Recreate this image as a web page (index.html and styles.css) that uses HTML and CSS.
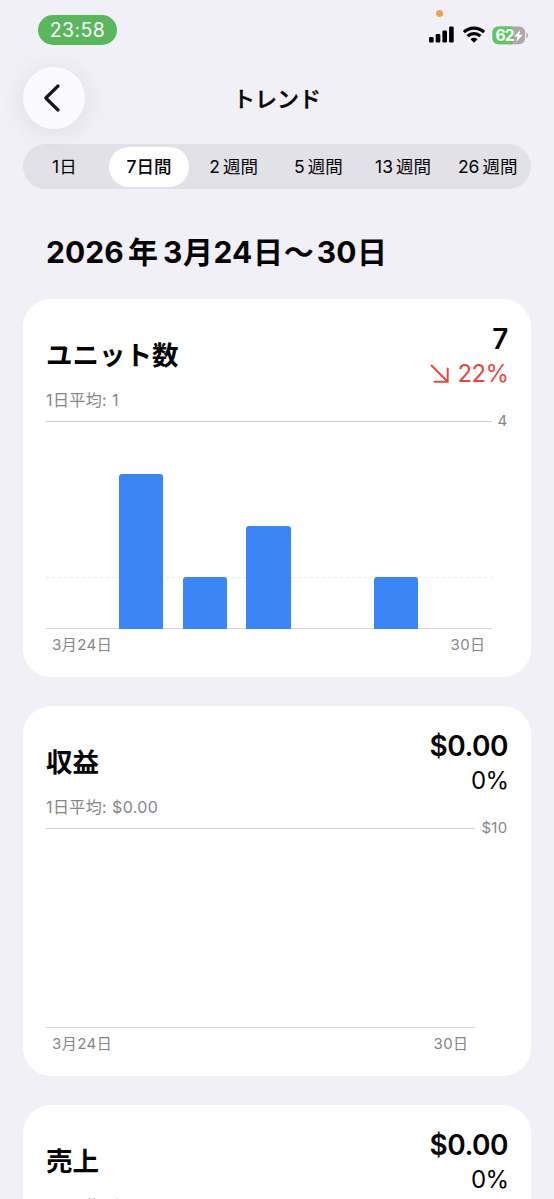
FILE: index.html
```html
<!DOCTYPE html>
<html lang="ja">
<head>
<meta charset="utf-8">
<title>トレンド</title>
<link rel="stylesheet" href="styles.css">
</head>
<body>
<div class="screen">
  <header class="status">
    <span class="clock">23:58</span>
    <div class="indicators">
      <i class="mic-dot"></i>
      <svg class="signal" width="25" height="17" viewBox="0 0 25 17"><rect x="0" y="11" width="4.6" height="5.6" rx="1.3"/><rect x="6.7" y="8" width="4.6" height="8.6" rx="1.3"/><rect x="13.4" y="4.4" width="4.6" height="12.2" rx="1.3"/><rect x="20.1" y="0.5" width="4.6" height="16.1" rx="1.3"/></svg>
      <svg class="wifi" width="24" height="17" viewBox="0 0 24 17"><path d="M1.9 6.2a14.4 14.4 0 0 1 20.2 0M5.6 10.2a9.2 9.2 0 0 1 12.8 0" fill="none" stroke="#000" stroke-width="3.2"/><path d="M8.5 13.2a5 5 0 0 1 7 0L12 16.8z"/></svg>
      <svg class="battery" width="37" height="19" viewBox="0 0 37 19"><defs><clipPath id="cell"><rect x="0.5" y="0.5" width="32.5" height="17.7" rx="5.6"/></clipPath></defs><g clip-path="url(#cell)"><path fill="#a9a9ad" d="M0 0h34v19H0z"/><path fill="#5dc85f" d="M0 0h20.7v19H0z"/></g><path fill="#a9a9ad" d="M34.2 6.4c2.4 1 2.4 4.8 0 5.8z"/><text x="3.4" y="15">62</text><path fill="#fff" d="M28.6 3.8 22.2 10.4h3.6l-1.7 5.6 6.7-7.2h-3.9z"/></svg>
    </div>
  </header>

  <nav class="navbar">
    <button class="back" aria-label="戻る"><svg width="18" height="28" viewBox="0 0 18 28"><path d="M15 2 2.8 14 15 26" fill="none" stroke="#161618" stroke-width="3.2" stroke-linecap="round" stroke-linejoin="round"/></svg></button>
    <h1>トレンド</h1>
  </nav>

  <div class="segments">
    <span>1日</span><span class="on">7日間</span><span>2<b>週間</b></span><span>5<b>週間</b></span><span>13<b>週間</b></span><span>26<b>週間</b></span>
  </div>

  <h2 class="period">2026<span class="year">年</span>3<span class="month">月</span>24<span class="day">日</span><span class="tilde">〜</span>30<span class="day">日</span></h2>

  <section class="card units">
    <div class="head">
      <h3>ユニット数</h3>
      <div class="figures">
        <strong>7</strong>
        <span class="change down"><svg width="20" height="20" viewBox="0 0 20 20"><path d="M1.5 1.5 17.7 17.7M17.7 4.5v13.2H4.5" fill="none" stroke="#e5493c" stroke-width="2" stroke-linecap="round"/></svg><span>22%</span></span>
      </div>
    </div>
    <p class="average">1日平均: 1</p>
    <div class="chart">
      <div class="plot">
        <div class="slot"></div>
        <div class="slot"><i style="height:75%"></i></div>
        <div class="slot"><i style="height:25%"></i></div>
        <div class="slot"><i style="height:50%"></i></div>
        <div class="slot"></div>
        <div class="slot"><i style="height:25%"></i></div>
        <div class="slot"></div>
      </div>
      <span class="max">4</span>
    </div>
    <div class="dates"><span>3月24日</span><span>30日</span></div>
  </section>

  <section class="card income">
    <div class="head">
      <h3>収益</h3>
      <div class="figures"><strong>$0.00</strong><span class="change">0%</span></div>
    </div>
    <p class="average">1日平均: $0.00</p>
    <div class="chart">
      <div class="plot"></div>
      <span class="max">$10</span>
    </div>
    <div class="dates"><span>3月24日</span><span>30日</span></div>
  </section>

  <section class="card sales">
    <div class="head">
      <h3>売上</h3>
      <div class="figures"><strong>$0.00</strong><span class="change">0%</span></div>
    </div>
    <p class="average">1日平均: $0.00</p>
  </section>
</div>
</body>
</html>
```
FILE: styles.css
```css
* { box-sizing: border-box; margin: 0; padding: 0; }
body { background: #f0f0f6; color: #050506; font-family: Inter, "Noto Sans CJK JP", sans-serif; }
.screen { width: 554px; height: 1199px; overflow: hidden; padding: 0 23px; }

.status { height: 67px; display: flex; justify-content: space-between; padding: 15px 2px 0 15px; }
.clock { width: 79px; height: 30px; border-radius: 15px; background: #5bb75d; color: #fff; font-size: 19.5px; line-height: 31px; text-align: center; letter-spacing: .4px; }
.indicators { position: relative; display: flex; align-items: flex-start; padding-top: 11px; }
.mic-dot { position: absolute; left: 7px; top: -5px; width: 7px; height: 7px; border-radius: 50%; background: #eea05a; }
.wifi { margin-left: 8px; }
.battery { margin-left: 6px; }
.battery text { font: 700 15.5px Inter, sans-serif; letter-spacing: -0.6px; fill: #fff; }

.navbar { height: 62px; display: grid; grid-template-columns: 62px 1fr 62px; align-items: center; }
.back { width: 62px; height: 62px; border: 0; border-radius: 50%; background: #fafaff; box-shadow: 0 3px 28px rgba(40, 40, 70, .09); display: flex; align-items: center; justify-content: center; padding-right: 4px; }
h1 { font-size: 22px; font-weight: 500; line-height: 60px; text-align: center; -webkit-text-stroke: .4px; padding-top: 2px; }

.segments { margin-top: 15px; height: 45px; border-radius: 23px; background: #e2e1e8; display: grid; grid-template-columns: repeat(6, 1fr); align-items: center; }
.segments span { margin: 0 3.5px 0 1.5px; height: 40px; line-height: 39px; border-radius: 20px; font-size: 17.5px; text-align: center; white-space: nowrap; }
.segments b { font-weight: 400; margin-left: 3px; }
.segments .on { background: #fff; font-weight: 500; }

.period { height: 110px; padding: 0 0 0 23px; font-size: 30px; font-weight: 700; line-height: 126px; white-space: nowrap; letter-spacing: .1px; }
.year { margin: 0 5px 0 4px; }
.month, .day { margin: 0 .5px; }
.tilde { margin-right: 3px; }

.card { background: #fff; border-radius: 28px; height: 378px; padding: 25px 23px 0; margin-bottom: 29px; }
.head { height: 63px; display: flex; justify-content: space-between; align-items: flex-start; }
h3 { font-size: 26.5px; font-weight: 700; line-height: 62px; }
.figures { display: flex; flex-direction: column; align-items: flex-end; }
.figures strong { font-size: 28px; font-weight: 600; line-height: 30px; letter-spacing: -.5px; }
.change { font-size: 24px; line-height: 39px; display: flex; align-items: center; letter-spacing: -.6px; margin-right: -.6px; }
.down { color: #e5493c; gap: 8px; }
.average { height: 34px; font-size: 16px; line-height: 27px; color: #85858a; letter-spacing: .4px; }
.chart { display: flex; justify-content: space-between; height: 208px; }
.plot { position: relative; width: 446px; height: 208px; display: grid; grid-template-columns: repeat(7, 1fr); border-top: 1px solid #cfcfd2; border-bottom: 1px solid #d4d4d7; }
.units .plot::before { content: ""; position: absolute; left: 0; right: 0; top: 155px; height: 1px; background: repeating-linear-gradient(90deg, #ececef 0 3px, transparent 3px 6px); }
.slot { position: relative; height: 207px; display: flex; align-items: flex-end; justify-content: center; padding-right: 1px; }
.slot i { width: 71%; background: #3b86f6; border-radius: 3px 3px 0 0; }
.max { color: #85858a; font-size: 15px; line-height: 20px; margin-top: -10px; padding-right: .5px; letter-spacing: .3px; }
.dates { display: flex; justify-content: space-between; width: 446px; padding: 0 6.5px 0 6px; font-size: 15px; line-height: 32px; color: #85858a; letter-spacing: .45px; }
.income { height: 370px; }
.income .chart, .income .plot { height: 200px; }
.income .plot, .income .dates { width: 429px; }
.income .dates { line-height: 31px; }
.sales { margin-bottom: 0; }
```
